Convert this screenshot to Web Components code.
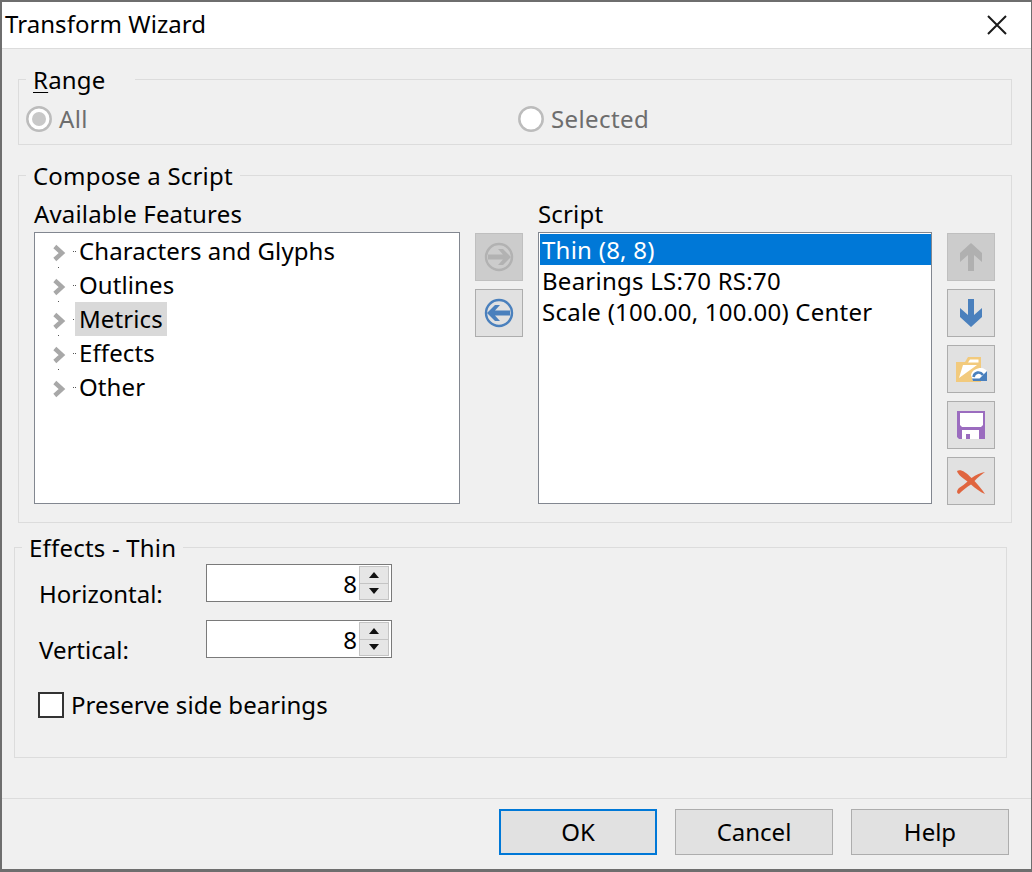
<!DOCTYPE html>
<html>
<head>
<meta charset="utf-8">
<title>Transform Wizard</title>
<style>
    html, body { margin: 0; padding: 0; }
    body { font: 24px/30px "Noto Sans", sans-serif; color: #000; }
    .range-row { display: grid; grid-template-columns: 492px 1fr; padding: 10px 0 9px 7px; }
    .compose { display: grid; grid-template-columns: 426px 48px 394px 48px; column-gap: 15px; grid-template-rows: 33px 273px; padding: 9px 0 0 15px; }
    .compose .head { line-height: 30px; letter-spacing: .17px; }
    .stack { display: flex; flex-direction: column; gap: 8px; padding-top: 1px; }
    .effects { display: flex; flex-direction: column; padding: 2px 0 0 24px; }
    .effects spin-field + spin-field { margin-top: 18px; }
    .effects check-field { margin-top: 32px; }
</style>
</head>
<body>
<wizard-dialog heading="Transform Wizard">
    <group-box legend="Range" accel="R" style="--gap:29px; height:64px; margin:30px 19px 0 16px">
        <div class="range-row">
            <radio-option checked>All</radio-option>
            <radio-option>Selected</radio-option>
        </div>
    </group-box>
    <group-box legend="Compose a Script" style="height:346px; margin:30px 19px 0 16px">
        <div class="compose">
            <div class="head">Available Features</div>
            <div></div>
            <div class="head">Script</div>
            <div></div>
            <feature-tree></feature-tree>
            <div class="stack">
                <tool-button icon="next" disabled></tool-button>
                <tool-button icon="prev"></tool-button>
            </div>
            <script-list></script-list>
            <div class="stack">
                <tool-button icon="up" disabled></tool-button>
                <tool-button icon="down"></tool-button>
                <tool-button icon="open"></tool-button>
                <tool-button icon="save"></tool-button>
                <tool-button icon="remove"></tool-button>
            </div>
        </div>
    </group-box>
    <group-box legend="Effects - Thin" style="--indent:7px; height:209px; margin:24px 24px 0 12px">
        <div class="effects">
            <spin-field label="Horizontal:" value="8"></spin-field>
            <spin-field label="Vertical:" value="8"></spin-field>
            <check-field>Preserve side bearings</check-field>
        </div>
    </group-box>
    <push-button slot="footer" default>OK</push-button>
    <push-button slot="footer">Cancel</push-button>
    <push-button slot="footer">Help</push-button>
</wizard-dialog>

<script>
    class WizardDialog extends HTMLElement {
        connectedCallback() {
            this.attachShadow({ mode: 'open' });
            this.shadowRoot.innerHTML = `
                <style>
                    :host {
                        display: flex;
                        flex-direction: column;
                        box-sizing: border-box;
                        width: 1032px;
                        height: 872px;
                        border: solid #6e6e6e;
                        border-width: 2px 1px 3px 2px;
                        background: #f0f0f0;
                    }
                    .title {
                        display: flex;
                        align-items: center;
                        justify-content: space-between;
                        height: 46px;
                        padding: 0 24px 0 3px;
                        background: #fff;
                        border-bottom: 1px solid #dcdcdc;
                        flex: none;
                    }
                    .title span { letter-spacing: .06px; margin-top: -2px; }
                    .body { flex: 1; }
                    .footer {
                        display: flex;
                        justify-content: flex-end;
                        gap: 18px;
                        flex: none;
                        height: 71px;
                        box-sizing: border-box;
                        padding: 10px 22px 0 0;
                        border-top: 1px solid #dcdcdc;
                    }
                    svg { display: block; }
                </style>
                <div class="title">
                    <span>${this.getAttribute('heading')}</span>
                    <svg width="20" height="20" viewBox="0 0 20 20"><path d="M1 1L19 19M19 1L1 19" stroke="#1a1a1a" stroke-width="2" fill="none"/></svg>
                </div>
                <div class="body"><slot></slot></div>
                <div class="footer"><slot name="footer"></slot></div>
            `;
        }
    }

    class GroupBox extends HTMLElement {
        connectedCallback() {
            const text = this.getAttribute('legend');
            const accel = this.getAttribute('accel');
            const label = accel ? `<u>${accel}</u>${text.slice(accel.length)}` : text;
            this.attachShadow({ mode: 'open' });
            this.shadowRoot.innerHTML = `
                <style>
                    :host {
                        display: block;
                        border: 1px solid #dcdcdc;
                    }
                    .legend {
                        display: table;
                        height: 28px;
                        line-height: 28px;
                        letter-spacing: .2px;
                        margin: -16px 0 0 var(--indent, 7px);
                        padding: 2px var(--gap, 7px) 0 7px;
                        background: #f0f0f0;
                    }
                    u { text-underline-offset: 3px; text-decoration-thickness: 1px; }
                </style>
                <div class="legend">${label}</div>
                <slot></slot>
            `;
        }
    }

    class RadioOption extends HTMLElement {
        connectedCallback() {
            const dot = this.hasAttribute('checked') ? '<circle cx="13" cy="13" r="7" fill="#c8c8c8"/>' : '';
            this.attachShadow({ mode: 'open' });
            this.shadowRoot.innerHTML = `
                <style>
                    :host { display: flex; align-items: center; gap: 7px; height: 30px; color: #6d6d6d; letter-spacing: .4px; }
                    svg { display: block; }
                </style>
                <svg width="26" height="26" viewBox="0 0 26 26"><circle cx="13" cy="13" r="11.7" fill="#fff" stroke="#bcbcbc" stroke-width="2.5"/>${dot}</svg>
                <slot></slot>
            `;
        }
    }

    const ICONS = {
        next: `<circle cx="24" cy="24" r="13" fill="none" stroke="#b2b2b2" stroke-width="2.4"/><path fill="#b2b2b2" d="M36 24L28 16H23L28 21.5H13V26.5H28L23 32H28Z"/>`,
        prev: `<circle cx="24" cy="24" r="13" fill="none" stroke="#4a80bd" stroke-width="2.4"/><path fill="#4a80bd" d="M12 24L20 16H25L20 21.5H35V26.5H20L25 32H20Z"/>`,
        up: `<path fill="#b0b0b0" d="M24 10L35 20V29L27 22V38H21V22L13 29V20Z"/>`,
        down: `<path fill="#4a80bd" d="M24 38L35 28V19L27 26V10H21V26L13 19V28Z"/>`,
        open: `<path fill="#f2ca7d" d="M9 17V37H34V12H21L18 17Z"/>
               <path fill="#fff" d="M12 33L16 20H30Z M23 14.5H31.5V17.5H21Z"/>
               <path fill="#fff" d="M24 30C25 25 30 23 34 23C37 23 39 25 40 26V36H26Z"/>
               <path d="M26.5 32C27.5 27 33 26 36 30" fill="none" stroke="#4a80bd" stroke-width="2.6"/>
               <path fill="#4a80bd" d="M40 26V33.5H32.5Z M25 33.5H40V36H26Z"/>`,
        save: `<path fill="#9b6cbf" d="M10 10H38V38H12L10 36Z"/>
               <path fill="#fff" d="M13 12H36V24L34 26H15L13 24Z"/>
               <path fill="#fff" d="M15 29H32V38H23V33H19V38H15Z"/>`,
        remove: `<path fill="#e0653f" d="M10 14C13 12 18 14 24.5 21C29 18 34 15.5 38 15C34 18 30 21 27.5 24C31 28 35 32 38 37C33 35 28 31 24 27.5C20 30 15 34 12 37C9 36 10 33 12 31C15 29 18 27 20.5 24.5C16 21 11 18 10 14Z"/>`
    };

    class ToolButton extends HTMLElement {
        connectedCallback() {
            this.attachShadow({ mode: 'open' });
            this.shadowRoot.innerHTML = `
                <style>
                    :host {
                        display: block;
                        box-sizing: border-box;
                        width: 48px;
                        height: 48px;
                        background: #e1e1e1;
                        outline: 1px solid #adadad;
                        outline-offset: -1px;
                    }
                    :host([disabled]) { background: #cccccc; outline-color: #bfbfbf; }
                    svg { display: block; }
                </style>
                <svg width="48" height="48" viewBox="0 0 48 48">${ICONS[this.getAttribute('icon')]}</svg>
            `;
        }
    }

    class FeatureTree extends HTMLElement {
        connectedCallback() {
            const items = ['Characters and Glyphs', 'Outlines', 'Metrics', 'Effects', 'Other'];
            const rows = items.map((name, i) => `
                <div class="row">
                    <svg width="40" height="34" viewBox="0 0 40 34">
                        <path d="M19.8 12.5L27 19L19.8 25.5" fill="none" stroke="#a8a8a8" stroke-width="4.4"/>
                        <path d="M38 17h1v1h-1zM40 17h1v1h-1z" fill="#555"/>
                        ${i < items.length - 1 ? '<path d="M23 33h1v1h-1z" fill="#555"/>' : ''}
                    </svg>
                    <span class="${name === 'Metrics' ? 'sel' : ''}">${name}</span>
                </div>`).join('');
            this.attachShadow({ mode: 'open' });
            this.shadowRoot.innerHTML = `
                <style>
                    :host {
                        display: block;
                        box-sizing: border-box;
                        height: 272px;
                        padding-top: 1px;
                        background: #fff;
                        border: 1px solid #828790;
                    }
                    .row { display: flex; height: 34px; line-height: 34px; }
                    svg { display: block; flex: none; overflow: visible; }
                    span { padding: 0 4px; height: 34px; letter-spacing: .1px; }
                    .sel { background: #d9d9d9; }
                </style>
                ${rows}
            `;
        }
    }

    class ScriptList extends HTMLElement {
        connectedCallback() {
            const steps = ['Thin (8, 8)', 'Bearings LS:70 RS:70', 'Scale (100.00, 100.00) Center'];
            this.attachShadow({ mode: 'open' });
            this.shadowRoot.innerHTML = `
                <style>
                    :host {
                        display: block;
                        box-sizing: border-box;
                        height: 272px;
                        padding: 1px 0 0 1px;
                        background: #fff;
                        border: 1px solid #828790;
                    }
                    div { height: 31px; line-height: 31px; padding-left: 2px; letter-spacing: .25px; }
                    .sel { background: #0078d7; color: #fff; }
                </style>
                ${steps.map((s, i) => `<div class="${i === 0 ? 'sel' : ''}">${s}</div>`).join('')}
            `;
        }
    }

    class SpinField extends HTMLElement {
        connectedCallback() {
            this.attachShadow({ mode: 'open' });
            this.shadowRoot.innerHTML = `
                <style>
                    :host { display: flex; height: 38px; }
                    label { width: 167px; height: 30px; margin-top: 15px; flex: none; }
                    .box {
                        display: flex;
                        justify-content: flex-end;
                        box-sizing: border-box;
                        width: 186px;
                        height: 38px;
                        padding: 1px;
                        background: #fff;
                        border: 1px solid #7a7a7a;
                    }
                    .value { line-height: 36px; margin-right: 2px; }
                    .spin { width: 30px; margin-right: 1px; display: flex; flex-direction: column; }
                    .spin div {
                        flex: 1;
                        background: #e6e6e6;
                        border: 1px solid #c4c4c4;
                        display: flex;
                        align-items: center;
                        justify-content: center;
                    }
                    .spin div + div { border-top: 0; }
                    svg { display: block; }
                </style>
                <label>${this.getAttribute('label')}</label>
                <div class="box">
                    <span class="value">${this.getAttribute('value')}</span>
                    <div class="spin">
                        <div><svg width="10" height="6" viewBox="0 0 10 6"><path d="M5 0L10 6H0Z" fill="#111"/></svg></div>
                        <div><svg width="10" height="6" viewBox="0 0 10 6"><path d="M0 0H10L5 6Z" fill="#111"/></svg></div>
                    </div>
                </div>
            `;
        }
    }

    class CheckField extends HTMLElement {
        connectedCallback() {
            this.attachShadow({ mode: 'open' });
            this.shadowRoot.innerHTML = `
                <style>
                    :host { display: flex; align-items: center; gap: 7px; height: 30px; margin-left: -1px; letter-spacing: .05px; }
                    .box { box-sizing: border-box; width: 26px; height: 26px; background: #fff; border: 2px solid #333; }
                </style>
                <div class="box"></div>
                <slot></slot>
            `;
        }
    }

    class PushButton extends HTMLElement {
        connectedCallback() {
            this.attachShadow({ mode: 'open' });
            this.shadowRoot.innerHTML = `
                <style>
                    :host {
                        display: flex;
                        align-items: center;
                        justify-content: center;
                        box-sizing: border-box;
                        width: 158px;
                        height: 46px;
                        background: #e1e1e1;
                        border: 1px solid #adadad;
                    }
                    :host([default]) { border: 2px solid #0078d7; }
                </style>
                <slot></slot>
            `;
        }
    }

    customElements.define('wizard-dialog', WizardDialog);
    customElements.define('group-box', GroupBox);
    customElements.define('radio-option', RadioOption);
    customElements.define('tool-button', ToolButton);
    customElements.define('feature-tree', FeatureTree);
    customElements.define('script-list', ScriptList);
    customElements.define('spin-field', SpinField);
    customElements.define('check-field', CheckField);
    customElements.define('push-button', PushButton);
</script>
</body>
</html>
